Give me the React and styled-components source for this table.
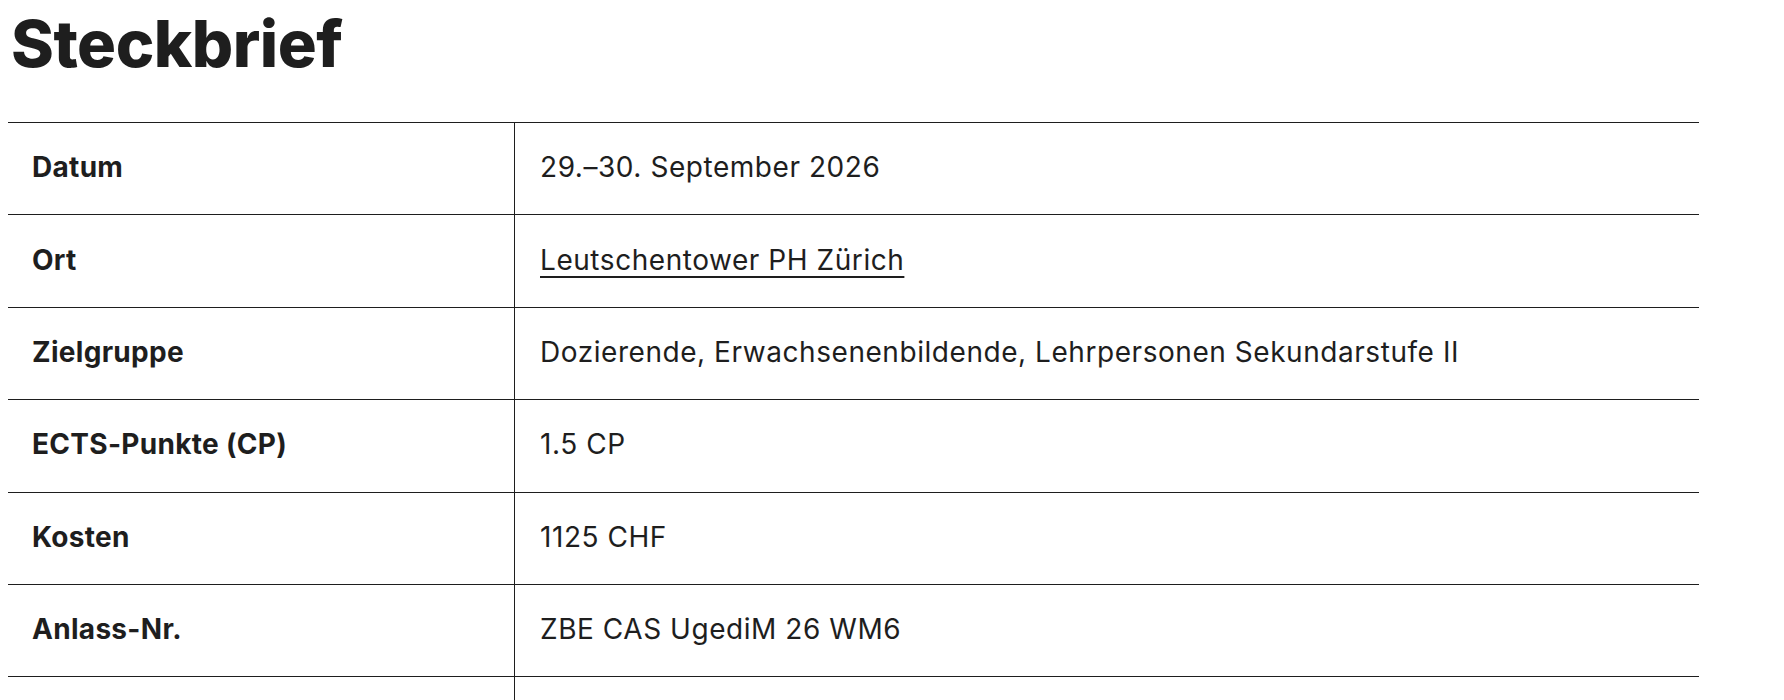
import styled, { createGlobalStyle } from "styled-components";

const GlobalStyle = createGlobalStyle`
  body {
    margin: 8px;
    background: #ffffff;
    color: #1e1e1e;
    font-family: Inter, "Open Sans", "Liberation Sans", sans-serif;
  }
`;

const rows = [
  { label: "Datum", value: "29.–30. September 2026" },
  { label: "Ort", value: "Leutschentower PH Zürich", link: true },
  {
    label: "Zielgruppe",
    value: "Dozierende, Erwachsenenbildende, Lehrpersonen Sekundarstufe II",
  },
  { label: "ECTS-Punkte (CP)", value: "1.5 CP" },
  { label: "Kosten", value: "1125 CHF" },
  { label: "Anlass-Nr.", value: "ZBE CAS UgediM 26 WM6" },
  { label: "\u00a0", value: "\u00a0" },
];

export default function App() {
  return (
    <Page>
      <GlobalStyle />
      <Title>Steckbrief</Title>
      <Table>
        <tbody>
          {rows.map((r, i) => (
            <Row key={i}>
              <Label>{r.label}</Label>
              <Value>{r.link ? <Place href="#">{r.value}</Place> : r.value}</Value>
            </Row>
          ))}
        </tbody>
      </Table>
    </Page>
  );
}

const Page = styled.main`
  display: flex;
  flex-direction: column;
`;

const Title = styled.h1`
  margin: 0 0 46px 0;
  padding: 3px 0 0 3px;
  font-size: 65px;
  line-height: 65px;
  font-weight: 800;
  letter-spacing: -0.5px;
  color: #1e1e1e;
`;

const Table = styled.table`
  width: 1691px;
  border-collapse: collapse;
  border-top: 1px solid #1e1e1e;
`;

const Row = styled.tr`
  border-bottom: 1px solid #1e1e1e;
`;

const Label = styled.td`
  width: 458px;
  padding: 29.2px 24px 32.2px 24px;
  line-height: 30px;
  font-size: 28px;
  font-weight: 700;
  letter-spacing: 0.3px;
  border-right: 1px solid #1e1e1e;
  vertical-align: middle;
`;

const Value = styled.td`
  padding: 29.2px 24px 32.2px 25px;
  line-height: 30px;
  font-size: 28px;
  font-weight: 400;
  letter-spacing: 0.55px;
  vertical-align: middle;
`;

const Place = styled.a`
  color: #1e1e1e;
  text-decoration: underline;
  text-decoration-thickness: 2px;
  text-underline-offset: 6px;
`;
